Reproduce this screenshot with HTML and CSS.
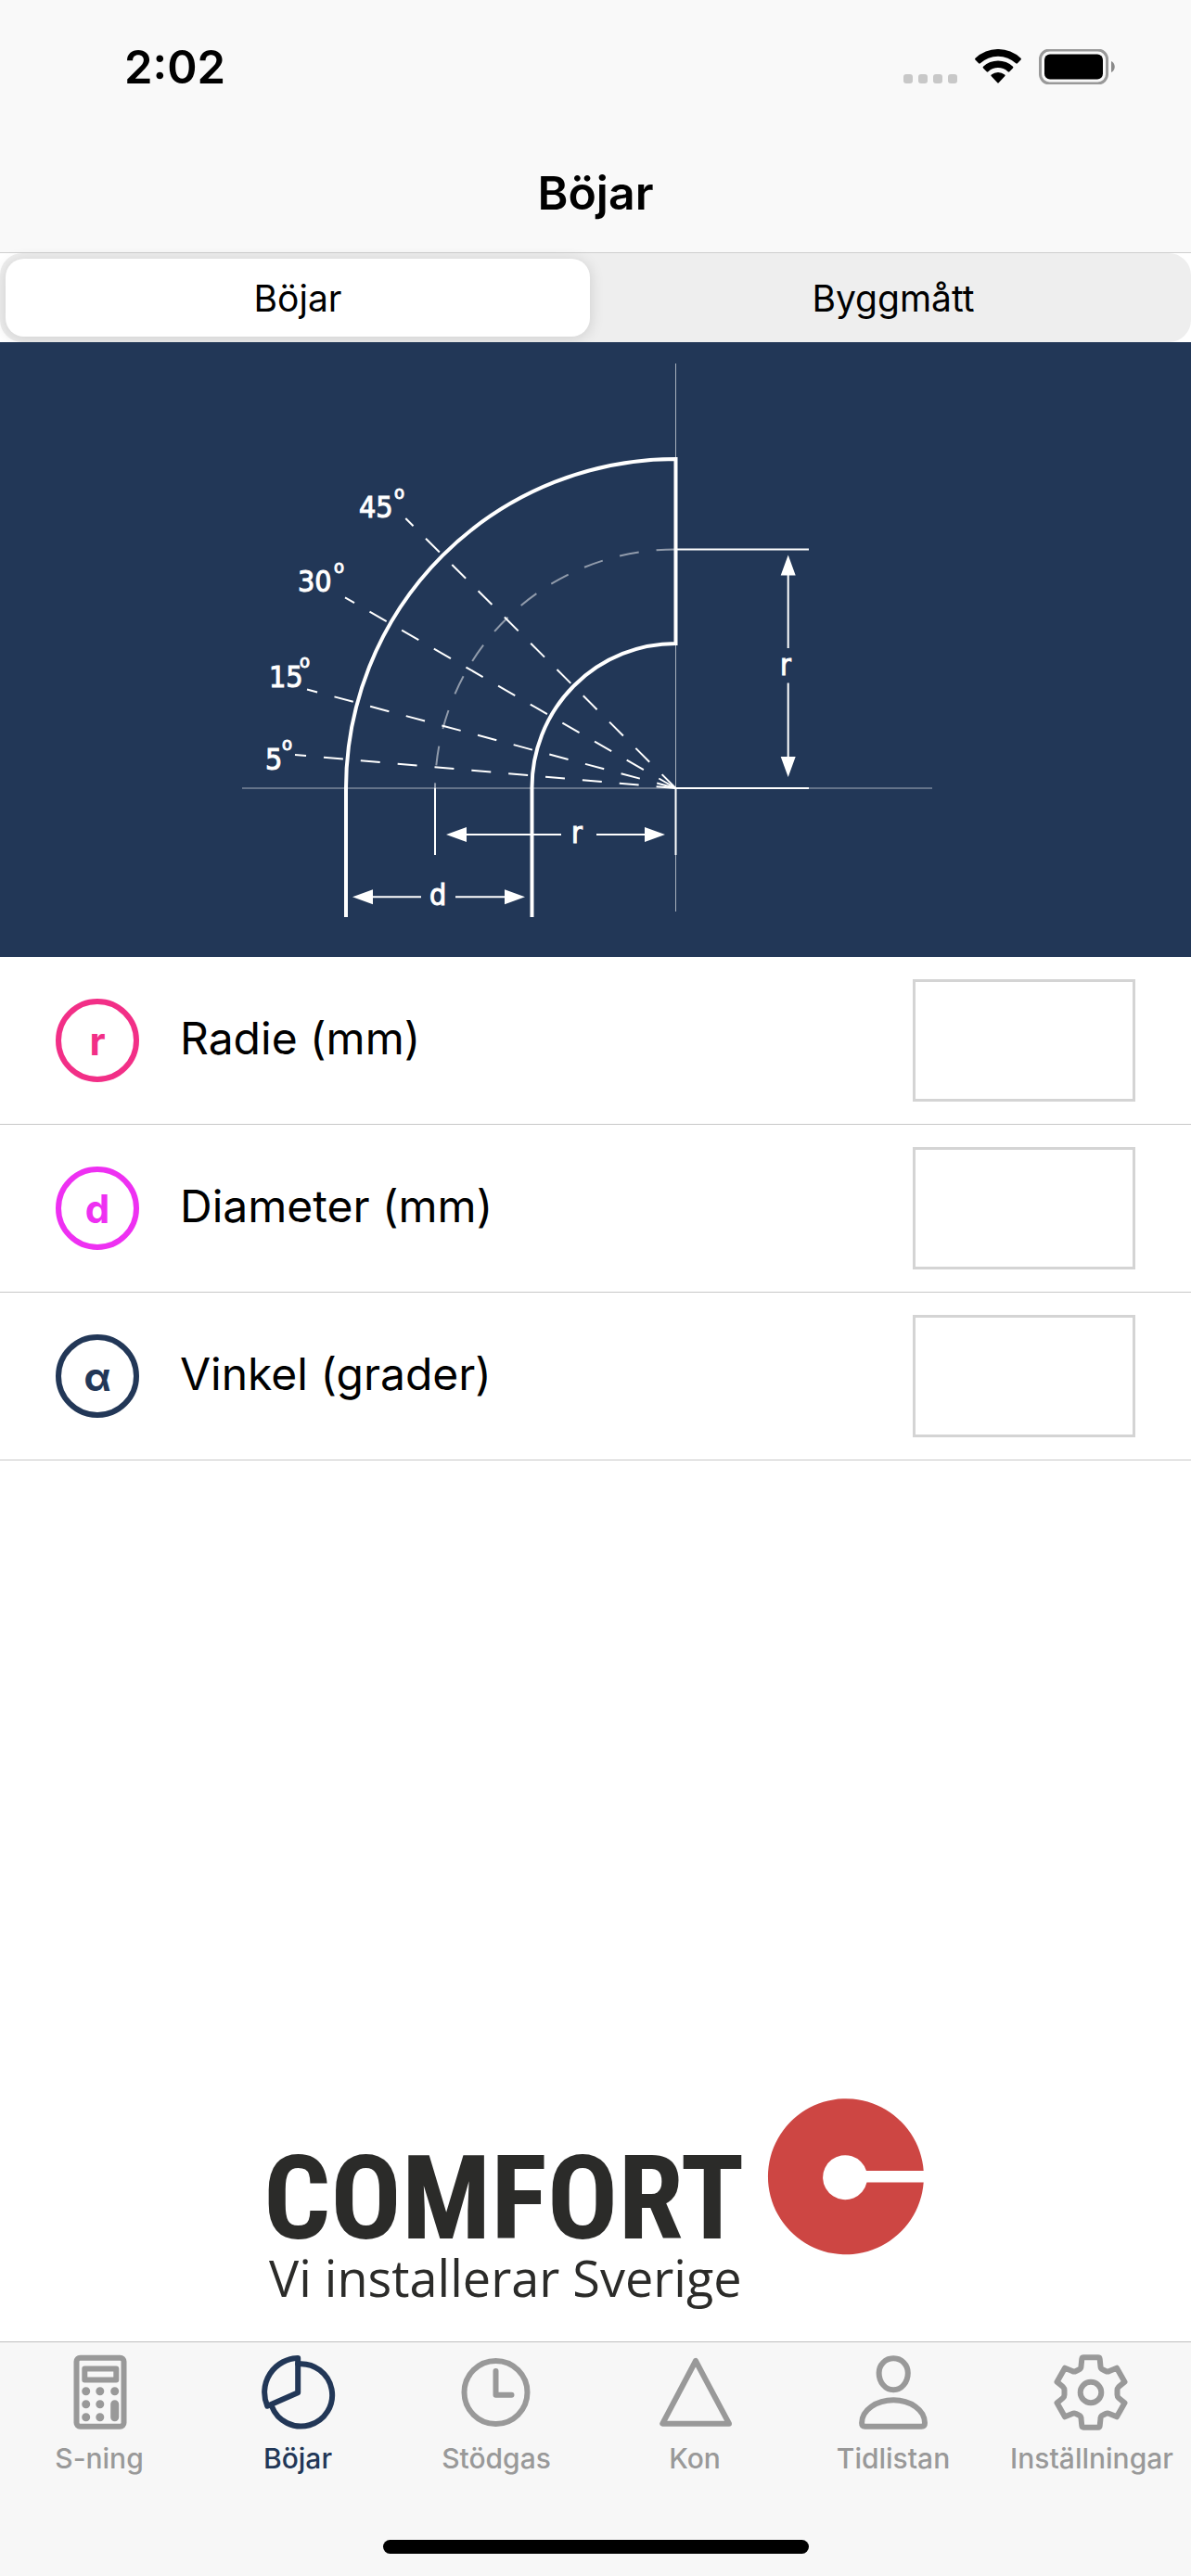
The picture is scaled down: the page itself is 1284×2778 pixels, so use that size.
FILE: index.html
```html
<!DOCTYPE html>
<html lang="sv">
<head>
    <meta charset="UTF-8">
    <meta name="viewport" content="width=device-width, initial-scale=1.0">
    <title>Böjar</title>
    <link rel="stylesheet" href="styles.css">
</head>
<body>
    <header class="header">
        <div class="status-bar">
            <span class="time">2:02</span>
            <div class="status-icons">
                <svg class="signal" viewBox="0 0 58 38">
                    <rect x="0" y="27" width="10" height="10" rx="3"/>
                    <rect x="16" y="27" width="10" height="10" rx="3"/>
                    <rect x="32" y="27" width="10" height="10" rx="3"/>
                    <rect x="48" y="27" width="10" height="10" rx="3"/>
                </svg>
                <svg class="wifi" viewBox="0 0 52 38">
                    <path d="M1.5 11.5a1.2 1.2 0 0 1 0-1.7a35.5 35.5 0 0 1 49 0a1.2 1.2 0 0 1 0 1.7l-3.6 3.8a1.2 1.2 0 0 1-1.7 0a28 28 0 0 0-38.4 0a1.2 1.2 0 0 1-1.7 0z"/>
                    <path d="M10 20.4a1.2 1.2 0 0 1 0-1.7a23.5 23.5 0 0 1 32 0a1.2 1.2 0 0 1 0 1.7l-3.7 3.8a1.2 1.2 0 0 1-1.7 0a15.6 15.6 0 0 0-21.2 0a1.2 1.2 0 0 1-1.7 0z"/>
                    <path d="M18.8 29.3a1.2 1.2 0 0 1 0-1.8a11.2 11.2 0 0 1 14.4 0a1.2 1.2 0 0 1 0 1.8l-6.3 6.7a1.2 1.2 0 0 1-1.8 0z"/>
                </svg>
                <svg class="battery" viewBox="0 0 82 38">
                    <rect x="1.5" y="1" width="72" height="36" rx="10" fill="none" stroke="#999" stroke-width="3"/>
                    <rect x="6" y="5.500" width="63" height="27" rx="6"/>
                    <path d="M78 13c5 2 5 10 0 12z" fill="#8a8a8a"/>
                </svg>
            </div>
        </div>
        <h1>Böjar</h1>
    </header>

    <main class="container">
        <div class="segments">
            <button class="segment selected" type="button">Böjar</button>
            <button class="segment" type="button">Byggmått</button>
        </div>

        <div class="diagram">
            <svg viewBox="0 0 1284 663">
                <!-- Axes -->
                <g class="axis">
                    <path d="M728.500 23V614"/>
                    <path d="M261 481H1005"/>
                    <path class="center-line" d="M728.500 223.500A259 259 0 0 0 469 481"/>
                </g>
                <!-- Pipe -->
                <path class="pipe" d="M373 620V481A355.500 355.500 0 0 1 728.500 126V325A155 155 0 0 0 573.500 481V620"/>
                <!-- Angles -->
                <g class="ray">
                    <path d="M728.500 481L318 445"/>
                    <path d="M728.500 481L331 374.500"/>
                    <path d="M728.500 481L372 275.300"/>
                    <path d="M728.500 481L437.300 190"/>
                </g>
                <!-- Dimensions -->
                <g class="dimension">
                    <path d="M728.500 223.500H872M728.500 481H872M469 481V553M728.500 481V553"/>
                    <path d="M849.700 250V330M849.700 367.500V448"/>
                    <path d="M502 531H605M643 531H696"/>
                    <path d="M402 598.300H454M491 598.300H545"/>
                </g>
                <g class="arrow">
                    <path d="M849.700 229.500l8 22h-16zM849.700 469l8-22h-16z"/>
                    <path d="M481 531l22-8v16zM717 531l-22-8v16z"/>
                    <path d="M380 598.300l22-8v16zM566 598.300l-22-8v16z"/>
                </g>
                <g class="mark">
                    <text x="387" y="189">45</text>
                    <text x="321" y="269">30</text>
                    <text x="290" y="372">15</text>
                    <text x="286" y="461">5</text>
                    <text x="616" y="540">r</text>
                    <text x="841" y="359">r</text>
                    <text x="463" y="607">d</text>
                </g>
                <g class="degree">
                    <text x="425" y="169">o</text>
                    <text x="360" y="249">o</text>
                    <text x="323" y="351">o</text>
                    <text x="304" y="440">o</text>
                </g>
            </svg>
        </div>

        <form class="fields">
            <div class="field">
                <span class="badge radius">r</span>
                <label for="radius">Radie (mm)</label>
                <input id="radius" type="text" inputmode="decimal">
            </div>
            <div class="field">
                <span class="badge diameter">d</span>
                <label for="diameter">Diameter (mm)</label>
                <input id="diameter" type="text" inputmode="decimal">
            </div>
            <div class="field">
                <span class="badge angle">α</span>
                <label for="angle">Vinkel (grader)</label>
                <input id="angle" type="text" inputmode="decimal">
            </div>
        </form>

        <div class="sponsor">
            <svg viewBox="0 0 708 224">
                <text class="sponsor-name" x="-4" y="149">COMFORT</text>
                <text class="sponsor-slogan" x="2" y="212">Vi installerar Sverige</text>
                <path fill="#cd4643" d="M707.700 76A84 84 0 1 0 707.700 88.500H646.500A24 24 0 1 1 646 76z"/>
            </svg>
        </div>
    </main>

    <nav class="tab-bar">
        <div class="tabs">
            <a class="tab" href="#">
                <svg viewBox="0 0 84 84">
                    <rect x="17.500" y="4.700" width="51" height="74" rx="4"/>
                    <rect x="26.300" y="16.500" width="34" height="12"/>
                    <path stroke-width="9" d="M27.700 40.700h.01M42.800 40.700h.01M58.700 40.700h.01M27.700 54.700h.01M42.800 54.700h.01M27.700 68.700h.01M42.800 68.700h.01M58.700 54.700v14"/>
                </svg>
                <span>S-ning</span>
            </a>
            <a class="tab active" href="#">
                <svg viewBox="0 0 84 84">
                    <path d="M42.200 42.300V5A37 37 0 0 0 9.200 56.700z"/>
                    <path d="M42.200 11.300A33.700 33.700 0 1 1 14 57"/>
                </svg>
                <span>Böjar</span>
            </a>
            <a class="tab" href="#">
                <svg viewBox="0 0 84 84">
                    <circle cx="41.500" cy="42" r="34"/>
                    <path d="M41.500 19v25.700h17"/>
                </svg>
                <span>Stödgas</span>
            </a>
            <a class="tab" href="#">
                <svg viewBox="0 0 84 84">
                    <path d="M43 8L7.300 75.700H79z"/>
                </svg>
                <span>Kon</span>
            </a>
            <a class="tab" href="#">
                <svg viewBox="0 0 84 84">
                    <path d="M42.200 5.300C51 5.300 57.800 12 57.800 21C57.800 31 51 39.300 42.200 39.300S26.600 31 26.600 21C26.600 12 33.500 5.300 42.200 5.300z"/>
                    <path d="M8.100 75C8.100 61 24 50.300 42.200 50.300S76 61 76 75q0 3.700-3.500 3.700H11.600Q8.100 78.700 8.100 75z"/>
                </svg>
                <span>Tidlistan</span>
            </a>
            <a class="tab" href="#">
                <svg viewBox="0 0 84 84">
                    <circle cx="41" cy="42" r="11.300"/>
                    <path d="M33 4.300H49Q50.500 4.300 50.700 6L51.500 14Q51.500 16.500 54 17.500L57 19Q59 20 61 19L69 15.700L77.500 30.700L71 36Q69.500 37.500 69.500 39.500V44.500Q69.500 46.500 71 48L77.500 53.300L69 68.300L61 65Q59 64 57 65L54 66.500Q51.500 67.500 51.500 70L50.700 78Q50.500 79.700 49 79.700H33Q31.500 79.700 31.300 78L30.500 70Q30.500 67.500 28 66.500L25 65Q23 64 21 65L13 68.300L4.500 53.300L11 48Q12.500 46.500 12.500 44.500V39.500Q12.500 37.500 11 36L4.500 30.700L13 15.700L21 19Q23 20 25 19L28 17.500Q30.500 16.500 30.500 14L31.300 6Q31.500 4.300 33 4.300z"/>
                </svg>
                <span>Inställningar</span>
            </a>
        </div>
        <div class="home-indicator"></div>
    </nav>
</body>
</html>
```
FILE: styles.css
```css
* {
    box-sizing: border-box;
}
body {
    display: flex;
    flex-direction: column;
    min-height: 100vh;
    margin: 0;
    background-color: white;
    color: black;
    font-family: Inter, "Liberation Sans", sans-serif;
}
svg {
    display: block;
}
.header {
    background-color: #f9f9f9;
    border-bottom: 1px solid #cfcfcf;
}
.status-bar {
    display: flex;
    justify-content: space-between;
    align-items: center;
    height: 144px;
    padding: 0 82px 0 134px;
}
.time {
    font-size: 49px;
    font-weight: 600;
}
.status-icons {
    display: flex;
    align-items: center;
}
.status-icons svg {
    height: 38px;
}
.signal {
    width: 58px;
    margin-right: 18px;
    fill: #c8c8c8;
}
.wifi {
    width: 52px;
    margin-right: 18px;
}
.battery {
    width: 82px;
}
h1 {
    margin: 0;
    font-size: 50px;
    font-weight: 600;
    line-height: 128px;
    text-align: center;
}
.container {
    display: flex;
    flex: 1;
    flex-direction: column;
}
.segments {
    display: grid;
    grid-template-columns: 1fr 1fr;
    gap: 12px;
    padding: 6px;
    background-color: #eee;
    border-radius: 24px;
}
.segment {
    height: 84px;
    padding: 0;
    border: none;
    border-radius: 20px;
    background: none;
    color: black;
    font-family: inherit;
    font-size: 39px;
    cursor: pointer;
}
.segment.selected {
    background-color: white;
    box-shadow: 0 2px 16px rgba(0, 0, 0, 0.14);
}
.diagram {
    background-color: #223757;
}
.diagram svg {
    width: 100%;
}
.diagram path {
    fill: none;
    stroke: white;
    stroke-width: 2;
}
.diagram .axis path {
    stroke-width: 1;
    opacity: 0.6;
}
.diagram .axis .center-line {
    stroke-width: 2;
    stroke-dasharray: 21 19;
    opacity: 0.5;
}
.diagram .pipe {
    stroke-width: 4;
}
.diagram .ray path {
    stroke-dasharray: 21 19;
}
.diagram .arrow path {
    fill: white;
    stroke: none;
}
.mark,
.degree {
    fill: white;
    stroke: white;
    stroke-width: 1;
    font-family: "DejaVu Sans Condensed", "DejaVu Sans", sans-serif;
    font-size: 32px;
}
.degree {
    font-size: 20px;
}
.field {
    display: flex;
    align-items: center;
    padding: 24px 60px;
    border-bottom: 1px solid #c8c8c8;
}
.badge {
    display: flex;
    align-items: center;
    justify-content: center;
    width: 90px;
    height: 90px;
    margin-right: 44px;
    border: 6px solid;
    border-radius: 50%;
    font-size: 42px;
    font-weight: 700;
}
.badge.radius {
    color: #f22f87;
}
.badge.diameter {
    color: #ee30f2;
}
.badge.angle {
    color: #223757;
}
.field label {
    flex: 1;
    padding-bottom: 6px;
    font-size: 48px;
}
.field input {
    width: 240px;
    height: 132px;
    padding: 0 20px;
    border: 3px solid #d4d4d4;
    border-radius: 0;
    font-family: inherit;
    font-size: 48px;
}
.sponsor {
    display: flex;
    justify-content: center;
    margin-top: auto;
    padding-bottom: 36px;
}
.sponsor svg {
    width: 708px;
    max-width: 90%;
    overflow: visible;
}
.sponsor-name,
.sponsor-slogan {
    fill: #2b2b29;
}
.sponsor-name {
    font-family: "Roboto Condensed", "Liberation Sans Narrow", "Liberation Sans", sans-serif;
    font-size: 127px;
    font-weight: 700;
}
.sponsor-slogan {
    font-family: "Open Sans", sans-serif;
    font-size: 54px;
}
.tab-bar {
    padding-bottom: 24px;
    border-top: 1px solid #c0c0c0;
    background-color: #f7f7f7;
}
.tabs {
    display: grid;
    grid-template-columns: repeat(6, 1fr);
    height: 213px;
    padding-top: 12px;
}
.tab {
    display: flex;
    flex-direction: column;
    align-items: center;
    gap: 12px;
    color: #999;
    font-size: 30px;
    font-weight: 500;
    line-height: 34px;
    text-decoration: none;
}
.tab svg {
    width: 84px;
    height: 84px;
    fill: none;
    stroke: currentColor;
    stroke-width: 6;
    stroke-linecap: round;
    stroke-linejoin: round;
}
.tab.active {
    color: #223757;
}
.home-indicator {
    width: 459px;
    height: 15px;
    margin: 0 auto;
    border-radius: 8px;
    background-color: black;
}
```
